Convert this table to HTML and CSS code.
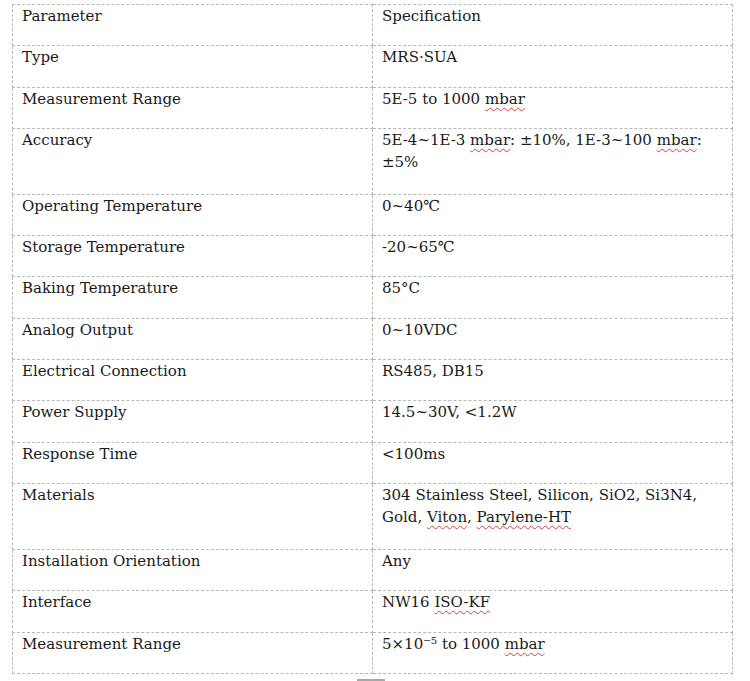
FILE: index.html
```html
<!DOCTYPE html>
<html>
<head>
<meta charset="utf-8">
<link rel="stylesheet" href="styles.css">
</head>
<body>
<table class="spec">
  <tr class="r"><td>Parameter</td><td>Specification</td></tr>
  <tr class="r"><td>Type</td><td>MRS·SUA</td></tr>
  <tr class="r"><td>Measurement Range</td><td>5E-5 to 1000 <span class="sp">mbar</span></td></tr>
  <tr class="r2"><td>Accuracy</td><td>5E-4~1E-3 <span class="sp">mbar</span>: ±10%, 1E-3~100 <span class="sp">mbar</span>: ±5%</td></tr>
  <tr class="r"><td>Operating Temperature</td><td>0~40℃</td></tr>
  <tr class="r"><td>Storage Temperature</td><td>-20~65℃</td></tr>
  <tr class="r"><td>Baking Temperature</td><td>85°C</td></tr>
  <tr class="r"><td>Analog Output</td><td>0~10VDC</td></tr>
  <tr class="r"><td>Electrical Connection</td><td>RS485, DB15</td></tr>
  <tr class="r"><td>Power Supply</td><td>14.5~30V, &lt;1.2W</td></tr>
  <tr class="r"><td>Response Time</td><td>&lt;100ms</td></tr>
  <tr class="r2"><td>Materials</td><td>304 Stainless Steel, Silicon, SiO2, Si3N4, Gold, <span class="sp">Viton</span>, <span class="sp">Parylene-HT</span></td></tr>
  <tr class="r"><td>Installation Orientation</td><td>Any</td></tr>
  <tr class="r"><td>Interface</td><td>NW16 <span class="sp">ISO-KF</span></td></tr>
  <tr class="r"><td>Measurement Range</td><td>5×10⁻⁵ to 1000 <span class="sp">mbar</span></td></tr>
</table>
<div class="handle"></div>
</body>
</html>
```
FILE: styles.css
```css
html, body {
  margin: 0;
  padding: 0;
  background: #ffffff;
}
body {
  padding: 4px 0 0 12px;
  font-family: "DejaVu Serif", "Liberation Serif", serif;
  color: #1a1a1a;
}
.spec {
  border-collapse: collapse;
  width: 721px;
  table-layout: fixed;
  font-size: 15px;
  line-height: 22px;
}
.spec td {
  border: 1px dashed #b8b8b8;
  vertical-align: top;
  padding: 0 9px 0 9px;
  width: 50%;
}
.spec tr.r td { height: 40.3px; }
.spec tr.r2 td { height: 65px; }
.sp {
  text-decoration: underline wavy #d04040;
  text-decoration-thickness: 1px;
  text-underline-offset: 3px;
}
.handle {
  width: 28px;
  height: 2px;
  margin: 5px 0 0 345px;
  background: #a8a8a8;
}
```
